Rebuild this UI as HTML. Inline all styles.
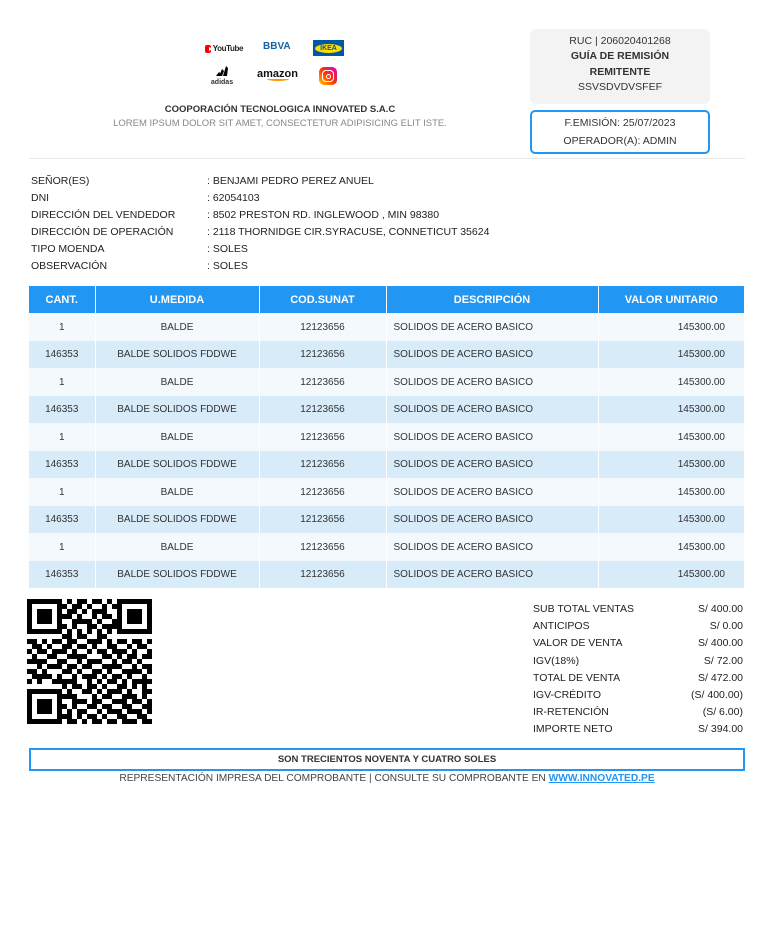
<!DOCTYPE html>
<html><head><meta charset="utf-8"><style>
*{margin:0;padding:0;box-sizing:border-box}
body{width:781px;height:934px;background:#fff;font-family:"Liberation Sans",Arial,sans-serif;color:#333;position:relative;overflow:hidden}
.a{position:absolute}
.rbox{left:530px;top:29px;width:180px;height:75px;background:#f3f3f3;border-radius:6px;text-align:center;font-size:10.5px;line-height:15.3px;padding-top:5px}
.bbox{left:530px;top:110px;width:180px;height:44px;border:2px solid #2196f3;border-radius:5px;text-align:center;font-size:10.5px;line-height:18px;padding-top:2px}
.info{left:31px;top:173px;font-size:10.5px;line-height:17px;color:#222}
.info div{display:flex}.info span:first-child{width:176px}
table{position:absolute;left:29px;top:286px;width:716px;border-collapse:collapse;font-size:10px}
th{background:#2196f3;color:#fff;height:27px;font-size:11px;border-right:1px solid #fff}
td{height:27.5px;border-right:1px solid #fff;color:#333;text-align:center;padding-top:1px}
tr:nth-child(even) td{background:#f4f9fd}tr:nth-child(odd) td{background:#d7ebf9}
td.l{text-align:left;padding-left:7px}td.r{text-align:right;padding-right:19px}
.tot{left:533px;top:601px;width:210px;font-size:10.5px;line-height:17.2px;color:#222}
.tot div{display:flex;justify-content:space-between}
</style></head><body>
<div class="a" style="left:205px;top:43px;width:38px;height:11px;font-size:8px;font-weight:bold;letter-spacing:-0.4px;color:#222;display:flex;align-items:center"><span style="display:inline-block;width:11px;height:8px;background:#f00;border-radius:2px;margin-right:2px;position:relative"><span style="position:absolute;left:4px;top:2px;border-left:4px solid #fff;border-top:2px solid transparent;border-bottom:2px solid transparent"></span></span>YouTube</div>
<div class="a" style="left:263px;top:41px;font-size:10px;font-weight:bold;color:#1464a5">BBVA</div>
<div class="a" style="left:313px;top:40px;width:31px;height:16px;background:#0058a3;display:flex;align-items:center;justify-content:center"><div style="background:#ffdb00;border-radius:50%;width:27px;height:9px;font-size:7px;font-weight:bold;color:#0058a3;text-align:center;line-height:9px">IKEA</div></div>
<div class="a" style="left:209px;top:66px;width:26px;text-align:center;font-size:7px;font-weight:bold;line-height:8px"><svg width="14" height="10" viewBox="0 0 14 10"><path d="M1 10L4 6L6 8L5 10ZM4 10L7 3L9 5L7 10ZM8 10L11 0L13 2L12 10Z" fill="#000"/></svg><br>adidas</div>
<div class="a" style="left:257px;top:68px;font-size:11px;font-weight:bold;color:#111">amazon<div style="width:22px;height:4px;border-bottom:2px solid #f90;border-radius:0 0 50% 50%;margin:-3px 0 0 10px"></div></div>
<div class="a" style="left:319px;top:67px;width:18px;height:18px;border-radius:5px;background:linear-gradient(45deg,#fc0,#f30 50%,#c0c);display:flex;align-items:center;justify-content:center"><div style="width:12px;height:12px;border:1.5px solid #fff;border-radius:4px;display:flex;align-items:center;justify-content:center"><div style="width:5px;height:5px;border:1.5px solid #fff;border-radius:50%"></div></div></div>
<div class="a" style="left:80px;width:400px;top:104px;text-align:center;font-size:9.5px;font-weight:bold;color:#333">COOPORACIÓN TECNOLOGICA INNOVATED S.A.C</div>
<div class="a" style="left:80px;width:400px;top:118px;text-align:center;font-size:9.5px;color:#888">LOREM IPSUM DOLOR SIT AMET, CONSECTETUR ADIPISICING ELIT ISTE.</div>
<div class="a rbox">RUC | 206020401268<br><b>GUÍA DE REMISIÓN<br>REMITENTE</b><br>SSVSDVDVSFEF</div>
<div class="a bbox">F.EMISIÓN: 25/07/2023<br>OPERADOR(A): ADMIN</div>
<div class="a" style="left:29px;top:158px;width:716px;height:1px;background:#e8e8e8"></div>
<div class="a info">
<div><span>SEÑOR(ES)</span><span>: BENJAMI PEDRO PEREZ ANUEL</span></div>
<div><span>DNI</span><span>: 62054103</span></div>
<div><span>DIRECCIÓN DEL VENDEDOR</span><span>: 8502 PRESTON RD. INGLEWOOD , MIN 98380</span></div>
<div><span>DIRECCIÓN DE OPERACIÓN</span><span>: 2118 THORNIDGE CIR.SYRACUSE, CONNETICUT 35624</span></div>
<div><span>TIPO MOENDA</span><span>: SOLES</span></div>
<div><span>OBSERVACIÓN</span><span>: SOLES</span></div>
</div>
<table>
<tr><th style="width:66px">CANT.</th><th style="width:164px">U.MEDIDA</th><th style="width:127px">COD.SUNAT</th><th style="width:212px">DESCRIPCIÓN</th><th>VALOR UNITARIO</th></tr>
<tr><td>1</td><td>BALDE</td><td>12123656</td><td class="l">SOLIDOS DE ACERO BASICO</td><td class="r">145300.00</td></tr>
<tr><td>146353</td><td>BALDE SOLIDOS FDDWE</td><td>12123656</td><td class="l">SOLIDOS DE ACERO BASICO</td><td class="r">145300.00</td></tr>
<tr><td>1</td><td>BALDE</td><td>12123656</td><td class="l">SOLIDOS DE ACERO BASICO</td><td class="r">145300.00</td></tr>
<tr><td>146353</td><td>BALDE SOLIDOS FDDWE</td><td>12123656</td><td class="l">SOLIDOS DE ACERO BASICO</td><td class="r">145300.00</td></tr>
<tr><td>1</td><td>BALDE</td><td>12123656</td><td class="l">SOLIDOS DE ACERO BASICO</td><td class="r">145300.00</td></tr>
<tr><td>146353</td><td>BALDE SOLIDOS FDDWE</td><td>12123656</td><td class="l">SOLIDOS DE ACERO BASICO</td><td class="r">145300.00</td></tr>
<tr><td>1</td><td>BALDE</td><td>12123656</td><td class="l">SOLIDOS DE ACERO BASICO</td><td class="r">145300.00</td></tr>
<tr><td>146353</td><td>BALDE SOLIDOS FDDWE</td><td>12123656</td><td class="l">SOLIDOS DE ACERO BASICO</td><td class="r">145300.00</td></tr>
<tr><td>1</td><td>BALDE</td><td>12123656</td><td class="l">SOLIDOS DE ACERO BASICO</td><td class="r">145300.00</td></tr>
<tr><td>146353</td><td>BALDE SOLIDOS FDDWE</td><td>12123656</td><td class="l">SOLIDOS DE ACERO BASICO</td><td class="r">145300.00</td></tr>
</table>
<svg id="qr" class="a" style="left:27px;top:599px" width="125" height="125" viewBox="0 0 25 25" shape-rendering="crispEdges"></svg>
<script>
var R=["1111111010110110101111111","1000001101101001011000001","1011101011010111001011101","1011101110100101101011101","1011101001111010011011101","1000001101001101111000001","1111111010101010101111111","0000000110110011000000000","1101011011001110101101101","0110100110110100110010110","1011011101001011011101001","0100110011110001101011011","1111001100101110010110100","0010111011011001111001011","1101000110100110100111101","0111101001011101011010010","1010011111001010110101111","0000000101101101001101010","1111111010011010111010011","1000001111000101100111010","1011101001110110011101101","1011101101001101100110011","1011101010110010111011101","1000001110101101001100110","1111111011010110110111011"],d="";
R.forEach(function(r,y){for(var x=0;x<25;x++)if(r[x]=="1")d+="M"+x+" "+y+"h1v1h-1z";});
document.getElementById("qr").innerHTML='<path d="'+d+'" fill="#000"/>';
</script>
<div class="a tot">
<div><span>SUB TOTAL VENTAS</span><span>S/ 400.00</span></div>
<div><span>ANTICIPOS</span><span>S/ 0.00</span></div>
<div><span>VALOR DE VENTA</span><span>S/ 400.00</span></div>
<div><span>IGV(18%)</span><span>S/ 72.00</span></div>
<div><span>TOTAL DE VENTA</span><span>S/ 472.00</span></div>
<div><span>IGV-CRÉDITO</span><span>(S/ 400.00)</span></div>
<div><span>IR-RETENCIÓN</span><span>(S/ 6.00)</span></div>
<div><span>IMPORTE NETO</span><span>S/ 394.00</span></div>
</div>
<div class="a" style="left:29px;top:748px;width:716px;height:23px;border:2px solid #2196f3;text-align:center;font-size:9.5px;font-weight:bold;line-height:19px;color:#333">SON TRECIENTOS NOVENTA Y CUATRO SOLES</div>
<div class="a" style="left:0;width:774px;top:773px;text-align:center;font-size:10.2px;color:#444">REPRESENTACIÓN IMPRESA DEL COMPROBANTE | CONSULTE SU COMPROBANTE EN <b style="color:#2196f3;text-decoration:underline">WWW.INNOVATED.PE</b></div>
</body></html>
